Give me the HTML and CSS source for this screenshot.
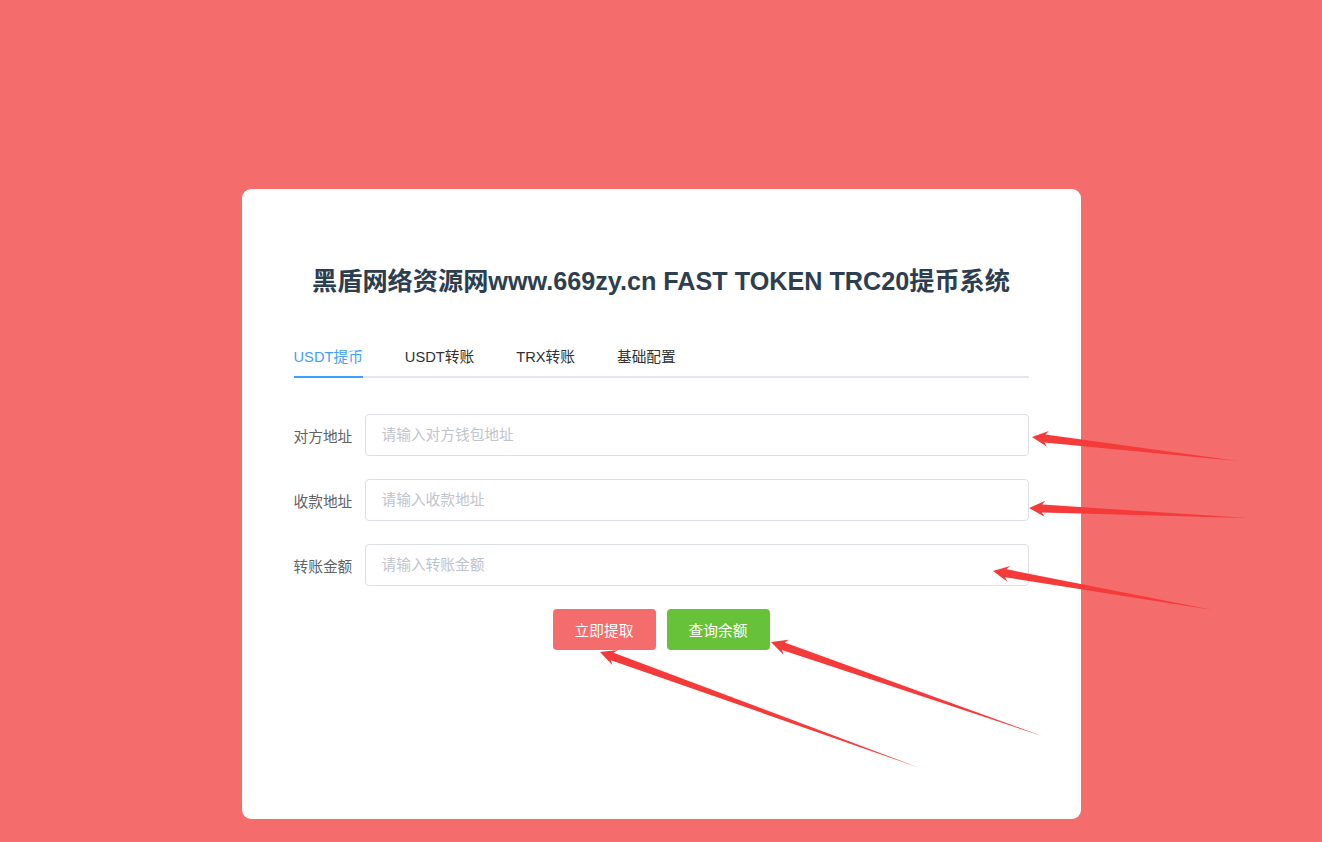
FILE: index.html
```html
<!DOCTYPE html>
<html lang="zh-CN">
<head>
<meta charset="utf-8">
<title>TRC20提币系统</title>
<link rel="stylesheet" href="styles.css">
</head>
<body>
<div class="page">
  <div class="card">
    <h1 class="title">黑盾网络资源网www.669zy.cn FAST TOKEN TRC20提币系统</h1>
    <div class="tabs">
      <div class="tab active">USDT提币</div>
      <div class="tab">USDT转账</div>
      <div class="tab">TRX转账</div>
      <div class="tab">基础配置</div>
    </div>
    <form class="form">
      <div class="row">
        <label class="label">对方地址</label>
        <input class="input" type="text" placeholder="请输入对方钱包地址">
      </div>
      <div class="row">
        <label class="label">收款地址</label>
        <input class="input" type="text" placeholder="请输入收款地址">
      </div>
      <div class="row">
        <label class="label">转账金额</label>
        <input class="input" type="text" placeholder="请输入转账金额">
      </div>
      <div class="actions">
        <button type="button" class="btn btn-danger">立即提取</button>
        <button type="button" class="btn btn-success">查询余额</button>
      </div>
    </form>
  </div>
</div>
<svg class="arrows" width="1322" height="842" viewBox="0 0 1322 842">
  <g fill="#f53a3a">
    <g transform="translate(1032 437) rotate(6.65)"><polygon points="0,0 16,-8 13,-4 207,0 13,4 16,8"/></g>
    <g transform="translate(1029 508) rotate(2.61)"><polygon points="0,0 16,-8 13,-4 219,0 13,4 16,8"/></g>
    <g transform="translate(993 571) rotate(10.05)"><polygon points="0,0 16,-8 13,-4 223,0 13,4 16,8"/></g>
    <g transform="translate(600 652) rotate(19.93)"><polygon points="0,0 16,-8 13,-4 340,0 13,4 16,8"/></g>
    <g transform="translate(771 642) rotate(19.13)"><polygon points="0,0 16,-8 13,-4 287,0 13,4 16,8"/></g>
  </g>
</svg>
</body>
</html>
```
FILE: styles.css
```css
* { box-sizing: border-box; }
html, body { margin: 0; padding: 0; }
body {
  background: #f46c6c;
  font-family: "Liberation Sans", Arial, "Noto Sans CJK SC", sans-serif;
  width: 1322px;
  height: 842px;
  overflow: hidden;
  position: relative;
}
.page {
  padding-top: 189px;
  display: flex;
  justify-content: center;
}
.card {
  width: 839px;
  height: 630px;
  background: #fff;
  border-radius: 9px;
  padding: 76px 52px 0;
}
.title {
  margin: 0;
  text-align: center;
  font-size: 25.2px;
  line-height: 32px;
  font-weight: bold;
  color: #2c3e50;
}
.tabs {
  margin-top: 41px;
  display: flex;
  height: 40px;
  border-bottom: 2px solid #e4e7ed;
}
.tab {
  font-size: 14.7px;
  color: #303133;
  line-height: 38px;
  padding: 0 21px;
  position: relative;
}
.tab:first-child { padding-left: 0; }
.tab.active { color: #409eff; }
.tab.active::after {
  content: "";
  position: absolute;
  left: 0;
  right: 21px;
  bottom: -2px;
  height: 2px;
  background: #409eff;
}
.form { margin-top: 36px; }
.row {
  display: flex;
  align-items: center;
  margin-bottom: 23px;
}
.label {
  width: 71px;
  flex: none;
  font-size: 14.7px;
  color: #606266;
}
.input {
  flex: 1;
  height: 42px;
  border: 1px solid #dcdfe6;
  border-radius: 4px;
  padding: 0 16px;
  font-size: 14.7px;
  font-family: inherit;
  color: #606266;
  outline: none;
}
.input::placeholder { color: #c0c4cc; }
.actions {
  display: flex;
  justify-content: center;
  gap: 11px;
  margin-top: 1px;
}
.btn {
  width: 103px;
  height: 41px;
  border: none;
  border-radius: 4px;
  color: #fff;
  font-size: 14.7px;
  font-family: inherit;
}
.btn-danger { background: #f56c6c; }
.btn-success { background: #67c23a; }
.arrows {
  position: absolute;
  left: 0;
  top: 0;
  pointer-events: none;
}
```
